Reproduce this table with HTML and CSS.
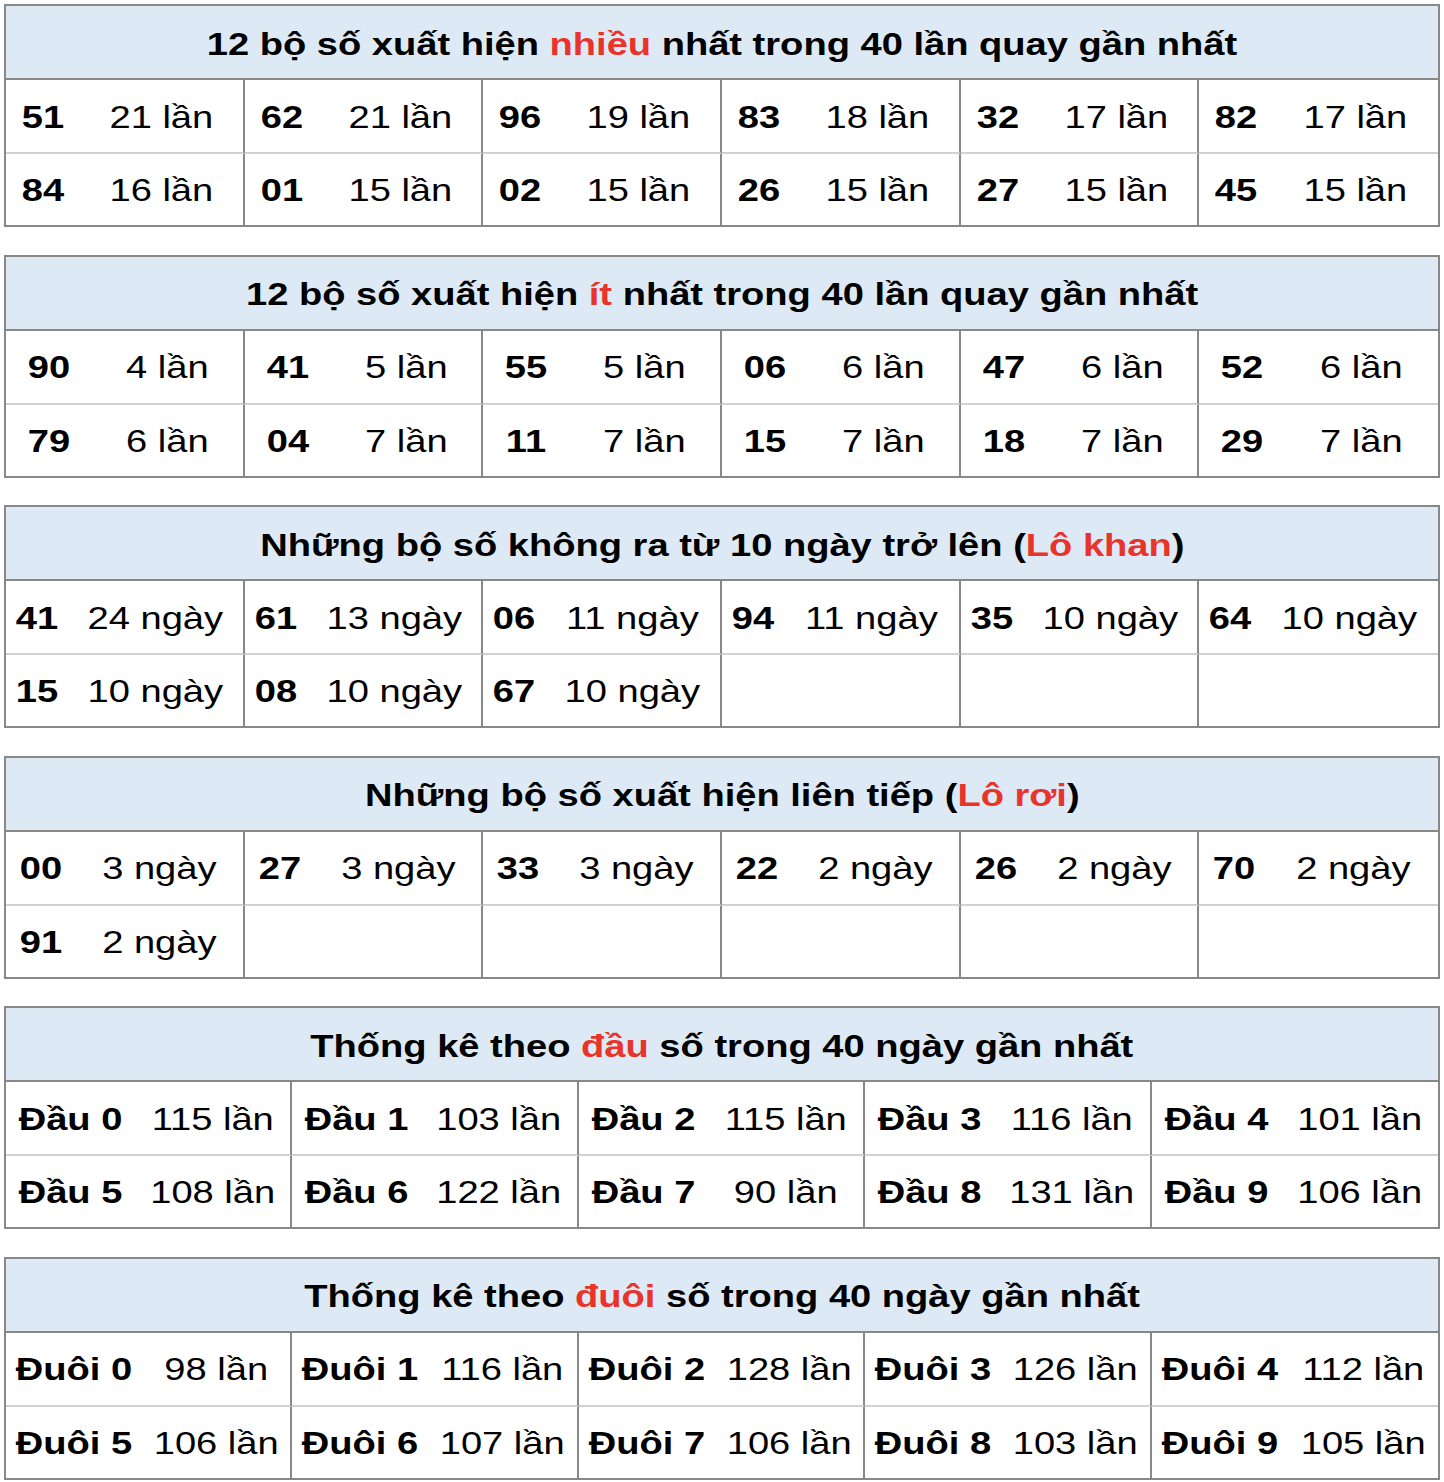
FILE: index.html
```html
<!DOCTYPE html>
<html lang="vi">
<head>
<meta charset="utf-8">
<title>Thống kê lô tô</title>
<link rel="stylesheet" href="styles.css">
</head>
<body>
<div class="page">
  <section class="stat t1">
    <div class="head"><span class="title">12 bộ số xuất hiện <span class="hl">nhiều</span> nhất trong 40 lần quay gần nhất</span></div>
    <div class="grid six">
      <div class="cell"><b>51</b><span>21 lần</span></div>
      <div class="cell"><b>62</b><span>21 lần</span></div>
      <div class="cell"><b>96</b><span>19 lần</span></div>
      <div class="cell"><b>83</b><span>18 lần</span></div>
      <div class="cell"><b>32</b><span>17 lần</span></div>
      <div class="cell"><b>82</b><span>17 lần</span></div>
      <div class="cell"><b>84</b><span>16 lần</span></div>
      <div class="cell"><b>01</b><span>15 lần</span></div>
      <div class="cell"><b>02</b><span>15 lần</span></div>
      <div class="cell"><b>26</b><span>15 lần</span></div>
      <div class="cell"><b>27</b><span>15 lần</span></div>
      <div class="cell"><b>45</b><span>15 lần</span></div>
    </div>
  </section>

  <section class="stat t2">
    <div class="head"><span class="title">12 bộ số xuất hiện <span class="hl">ít</span> nhất trong 40 lần quay gần nhất</span></div>
    <div class="grid six">
      <div class="cell"><b>90</b><span>4 lần</span></div>
      <div class="cell"><b>41</b><span>5 lần</span></div>
      <div class="cell"><b>55</b><span>5 lần</span></div>
      <div class="cell"><b>06</b><span>6 lần</span></div>
      <div class="cell"><b>47</b><span>6 lần</span></div>
      <div class="cell"><b>52</b><span>6 lần</span></div>
      <div class="cell"><b>79</b><span>6 lần</span></div>
      <div class="cell"><b>04</b><span>7 lần</span></div>
      <div class="cell"><b>11</b><span>7 lần</span></div>
      <div class="cell"><b>15</b><span>7 lần</span></div>
      <div class="cell"><b>18</b><span>7 lần</span></div>
      <div class="cell"><b>29</b><span>7 lần</span></div>
    </div>
  </section>

  <section class="stat t3">
    <div class="head"><span class="title">Những bộ số không ra từ 10 ngày trở lên (<span class="hl">Lô khan</span>)</span></div>
    <div class="grid six">
      <div class="cell"><b>41</b><span>24 ngày</span></div>
      <div class="cell"><b>61</b><span>13 ngày</span></div>
      <div class="cell"><b>06</b><span>11 ngày</span></div>
      <div class="cell"><b>94</b><span>11 ngày</span></div>
      <div class="cell"><b>35</b><span>10 ngày</span></div>
      <div class="cell"><b>64</b><span>10 ngày</span></div>
      <div class="cell"><b>15</b><span>10 ngày</span></div>
      <div class="cell"><b>08</b><span>10 ngày</span></div>
      <div class="cell"><b>67</b><span>10 ngày</span></div>
      <div class="cell"></div>
      <div class="cell"></div>
      <div class="cell"></div>
    </div>
  </section>

  <section class="stat t4">
    <div class="head"><span class="title">Những bộ số xuất hiện liên tiếp (<span class="hl">Lô rơi</span>)</span></div>
    <div class="grid six">
      <div class="cell"><b>00</b><span>3 ngày</span></div>
      <div class="cell"><b>27</b><span>3 ngày</span></div>
      <div class="cell"><b>33</b><span>3 ngày</span></div>
      <div class="cell"><b>22</b><span>2 ngày</span></div>
      <div class="cell"><b>26</b><span>2 ngày</span></div>
      <div class="cell"><b>70</b><span>2 ngày</span></div>
      <div class="cell"><b>91</b><span>2 ngày</span></div>
      <div class="cell"></div>
      <div class="cell"></div>
      <div class="cell"></div>
      <div class="cell"></div>
      <div class="cell"></div>
    </div>
  </section>

  <section class="stat t5">
    <div class="head"><span class="title">Thống kê theo <span class="hl">đầu</span> số trong 40 ngày gần nhất</span></div>
    <div class="grid five">
      <div class="cell"><b>Đầu 0</b><span>115 lần</span></div>
      <div class="cell"><b>Đầu 1</b><span>103 lần</span></div>
      <div class="cell"><b>Đầu 2</b><span>115 lần</span></div>
      <div class="cell"><b>Đầu 3</b><span>116 lần</span></div>
      <div class="cell"><b>Đầu 4</b><span>101 lần</span></div>
      <div class="cell"><b>Đầu 5</b><span>108 lần</span></div>
      <div class="cell"><b>Đầu 6</b><span>122 lần</span></div>
      <div class="cell"><b>Đầu 7</b><span>90 lần</span></div>
      <div class="cell"><b>Đầu 8</b><span>131 lần</span></div>
      <div class="cell"><b>Đầu 9</b><span>106 lần</span></div>
    </div>
  </section>

  <section class="stat t6">
    <div class="head"><span class="title">Thống kê theo <span class="hl">đuôi</span> số trong 40 ngày gần nhất</span></div>
    <div class="grid five">
      <div class="cell"><b>Đuôi 0</b><span>98 lần</span></div>
      <div class="cell"><b>Đuôi 1</b><span>116 lần</span></div>
      <div class="cell"><b>Đuôi 2</b><span>128 lần</span></div>
      <div class="cell"><b>Đuôi 3</b><span>126 lần</span></div>
      <div class="cell"><b>Đuôi 4</b><span>112 lần</span></div>
      <div class="cell"><b>Đuôi 5</b><span>106 lần</span></div>
      <div class="cell"><b>Đuôi 6</b><span>107 lần</span></div>
      <div class="cell"><b>Đuôi 7</b><span>106 lần</span></div>
      <div class="cell"><b>Đuôi 8</b><span>103 lần</span></div>
      <div class="cell"><b>Đuôi 9</b><span>105 lần</span></div>
    </div>
  </section>
</div>
</body>
</html>
```

FILE: styles.css
```css
html, body {
  margin: 0;
  padding: 0;
  background: #ffffff;
}

body {
  font-family: "Liberation Sans", Arial, Helvetica, sans-serif;
  color: #000000;
}

.page {
  padding: 4px 4px 0 4px;
  display: flex;
  flex-direction: column;
  gap: 27.6px;
}

.stat {
  border: 2px solid #888888;
}

.head {
  box-sizing: border-box;
  height: 74px;
  padding-top: 4px;
  background: #ddeaf6;
  border-bottom: 2px solid #888888;
  display: flex;
  align-items: center;
  justify-content: center;
  font-size: 32px;
  font-weight: bold;
  white-space: nowrap;
}

.title {
  display: inline-block;
  transform: scaleX(1.19);
  transform-origin: center;
}

.hl {
  color: #e8342a;
}

.grid {
  display: grid;
}

.grid.six {
  grid-template-columns: repeat(6, 1fr);
}

.grid.five {
  grid-template-columns: repeat(5, 1fr);
}

.cell {
  box-sizing: border-box;
  height: 74px;
  padding-top: 2px;
  display: grid;
  align-items: center;
  text-align: center;
  font-size: 32px;
  white-space: nowrap;
  border-right: 2px solid #888888;
  border-bottom: 2px solid #d2d2d2;
}

.grid.six .cell:nth-child(6n),
.grid.five .cell:nth-child(5n) {
  border-right: 0;
}

.grid.six .cell:nth-child(n+7),
.grid.five .cell:nth-child(n+6) {
  border-bottom: 0;
  height: 71px;
}

.cell b,
.cell span {
  display: block;
  transform: scaleX(1.19);
  transform-origin: center;
}

.cell b {
  font-weight: bold;
}

.t1 .cell { grid-template-columns: 74px 1fr; }
.t2 .cell { grid-template-columns: 86px 1fr; }
.t3 .cell { grid-template-columns: 62px 1fr; }
.t4 .cell { grid-template-columns: 70px 1fr; }
.t5 .cell { grid-template-columns: 129px 1fr; }
.t6 .cell { grid-template-columns: 136px 1fr; }
```
